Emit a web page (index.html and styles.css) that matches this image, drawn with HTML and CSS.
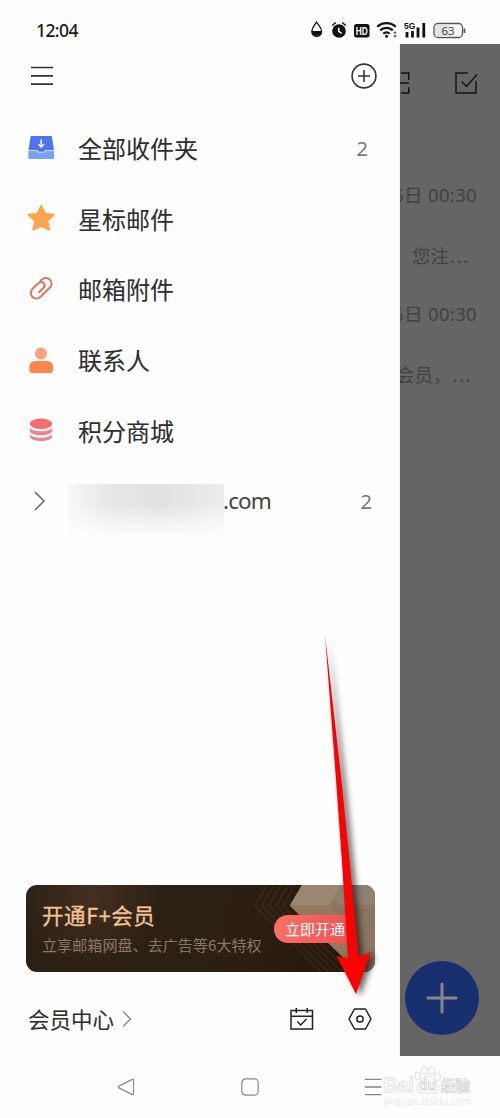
FILE: index.html
```html
<!DOCTYPE html>
<html lang="zh-CN">
<head>
<meta charset="utf-8">
<title>邮箱</title>
<link rel="stylesheet" href="styles.css">
</head>
<body>
<div class="phone">
  <header class="status">
    <span class="clock">12:04</span>
    <svg class="status-icons" width="160" height="24" viewBox="0 0 160 24">
      <path d="M6.500 4C4.500 7.500 1.800 9.600 1.800 13.500a4.900 4.900 0 0 0 9.800 0c0-3.900-3-6-5.100-9.500z" fill="none" stroke="#111" stroke-width="1.300"/>
      <path d="M1.800 13h9.800a4.900 5 0 0 1-9.800 0z" fill="#111"/>
      <circle cx="29" cy="13" r="6.800" fill="#111"/>
      <path d="M22.200 7.500l3.600-3M35.800 7.500l-3.600-3" stroke="#111" stroke-width="1.500"/>
      <path d="M28.800 9.800v3.600l2.800 2" stroke="#fff" stroke-width="1.500" fill="none"/>
      <rect x="44" y="6" width="15.500" height="13.500" rx="2.500" fill="#111"/>
      <text x="51.800" y="16.700" text-anchor="middle" class="hd" textLength="12" lengthAdjust="spacingAndGlyphs">HD</text>
      <path d="M67.200 8.800a13.500 13.500 0 0 1 18.600 0M70.200 12.400a9 9 0 0 1 12.600 0M73.300 15.800a4.500 4.500 0 0 1 6.400 0" fill="none" stroke="#111" stroke-width="2.200"/>
      <circle cx="76.500" cy="18.300" r="1.500" fill="#111"/>
      <path d="M83 15.500l2-2.500 2 2.500zM83 17.200l2 2.500 2-2.500z" fill="#555"/>
      <text x="94" y="11.300" class="fiveg">5G</text>
      <path d="M97 14v5.500M102.500 13v6.500M108 9.500v10M113.800 5v14.500" stroke="#111" stroke-width="2.800"/>
      <rect x="124" y="5.500" width="28.500" height="14" rx="4" fill="#fff" stroke="#555" stroke-width="1.300"/>
      <path d="M128 6.500h12v12.300h-12a3 3 0 0 1-3-3V9.500a3 3 0 0 1 3-3z" fill="#e3e3e3"/>
      <path d="M154.500 10.500v4.500" stroke="#555" stroke-width="1.800"/>
      <text x="138" y="16.700" text-anchor="middle" class="level">63</text>
    </svg>
  </header>

  <div class="main">
    <aside class="drawer">
      <div class="topbar">
        <svg width="26" height="26" viewBox="0 0 26 26"><path d="M2 4.500h22M2 12.800h22M2 21.200h22" stroke="#333" stroke-width="1.700"/></svg>
        <svg width="28" height="28" viewBox="0 0 28 28"><circle cx="14" cy="14" r="11.900" fill="none" stroke="#333" stroke-width="1.600"/><path d="M14 8v12M8 14h12" stroke="#333" stroke-width="1.600"/></svg>
      </div>

      <nav class="menu">
        <div class="item">
          <svg class="ico" width="28" height="28" viewBox="0 0 28 28"><path d="M4.500 2h19.300c.7 0 1 .4 1.200 1l2 13H18.500l-1.700 1.700h-5.300L9.800 16H1.500l2-13c.1-.6.4-1 1-1z" fill="#4f75ee"/><path d="M1.300 16.800h8l1.800 1.800h6.100l1.800-1.800h8V24q0 1-1 1H2.300q-1 0-1-1z" fill="#78a0f5"/><path d="M14.200 5.500v6.500M11.500 10.200l2.700 3 2.700-3" stroke="#fff" stroke-width="1.500" fill="none"/></svg>
          <span class="name">全部收件夹</span><span class="count">2</span>
        </div>
        <div class="item">
          <svg class="ico" width="28" height="28" viewBox="0 0 28 28"><path d="M14.200 1.500l4 8 8.700 1.100-6.300 6.300 1.800 9-8.200-3.700-8.200 3.700 1.700-9-6.400-6.300 8.800-1.100z" fill="#faa64c" stroke="#faa64c" stroke-width="1.500" stroke-linejoin="round"/></svg>
          <span class="name">星标邮件</span>
        </div>
        <div class="item">
          <svg class="ico" width="28" height="28" viewBox="0 0 28 28"><path d="M13.400 5.800l1.500-1.400c2-1.800 5.900-2 8.100.5 2.100 2.300 2.100 5.400.1 7.400l-9.200 9.200c-2.400 2.400-6 2.800-8.400.5-2.500-2.400-2.200-5.900.1-8.200l5.800-5.600c1.700-1.500 4-1.500 5.300-.1 1.400 1.500 1.100 3.500-.3 4.900l-4.300 4.200" fill="none" stroke="#da7563" stroke-width="2" stroke-linecap="round"/></svg>
          <span class="name">邮箱附件</span>
        </div>
        <div class="item">
          <svg class="ico" width="28" height="28" viewBox="0 0 28 28"><circle cx="14" cy="7.500" r="6" fill="#fca27c"/><path d="M2.300 24v-3.500a5.500 5.500 0 0 1 5.500-5.500H20.500a5.500 5.500 0 0 1 5.500 5.500V24q0 3-3 3H5.300q-3 0-3-3z" fill="#fd864d"/></svg>
          <span class="name">联系人</span>
        </div>
        <div class="item">
          <svg class="ico" width="28" height="28" viewBox="0 0 28 28"><ellipse cx="14" cy="7.800" rx="11.200" ry="5.300" fill="#f86c70"/><path d="M2.800 11.500c2 5 20.400 5 22.400 0v3.300c-1 6-21.400 6-22.400 0zM2.800 18c2 5 20.400 5 22.400 0v2.500c-1 6-21.400 6-22.400 0z" fill="#ed838b"/></svg>
          <span class="name">积分商城</span>
        </div>
        <div class="item account">
          <svg class="chev" width="14" height="22" viewBox="0 0 14 22"><path d="M1 2l9 9-9 9" fill="none" stroke="#666" stroke-width="1.500"/></svg>
          <span class="masked"></span><span class="domain">.com</span><span class="count">2</span>
        </div>
      </nav>

      <section class="vip">
        <svg class="vip-art" width="349" height="87" viewBox="0 0 349 87">
          <path d="M276 0h73v87h-17L264 21z" fill="#8d7660"/>
          <path d="M264 20h85v67h-17z" fill="#95795c"/>
          <path d="M276 0h38l-10 20h-40z" fill="#9b8670"/>
          <path d="M314 0h35v20h-35l-8-6z" fill="#8f8172"/>
          <path d="M304 20h45v67h-17l-6-30z" fill="#8b7660"/>
          <path d="M269 0l-12 21 66 66M262 0l-12 21 66 66M255 0l-12 21 66 66M248 0l-12 21 66 66M241 0l-12 21 66 66" fill="none" stroke="#4b3826" stroke-width="1.300" opacity=".55"/>
        </svg>
        <div class="vip-copy">
          <div class="vip-title">开通F+会员</div>
          <div class="vip-sub">立享邮箱网盘、去广告等6大特权</div>
        </div>
        <div class="vip-btn">立即开通</div>
      </section>

      <footer class="foot">
        <span class="center">会员中心</span>
        <svg class="more" width="12" height="18" viewBox="0 0 12 18"><path d="M2 1.500L9.500 9 2 16.500" fill="none" stroke="#888" stroke-width="1.400"/></svg>
        <svg class="cal" width="26" height="26" viewBox="0 0 26 26"><path d="M2 4.500h21.500V23H2zM2 10.300h21.500M7.300 2v5M18.200 2v5M8.300 15.500l3.400 3.500 5.800-6" fill="none" stroke="#222" stroke-width="1.500"/></svg>
        <svg width="26" height="26" viewBox="0 0 26 26"><path d="M7.500 3h11l5.500 10-5.500 10h-11L2 13z" fill="none" stroke="#222" stroke-width="1.500" stroke-linejoin="round"/><circle cx="13" cy="13" r="3.100" fill="none" stroke="#222" stroke-width="1.500"/></svg>
      </footer>
    </aside>

    <div class="inbox">
      <div class="tools">
        <svg width="11" height="24" viewBox="0 0 11 24"><path d="M1 2h7.800v7M0 12h9M1 22h7.800v-6" fill="none" stroke="#111" stroke-width="1.500"/></svg>
        <svg width="26" height="26" viewBox="0 0 26 26"><path d="M15 3H3v20h20V11M8.500 11.500l5 5L24 4.500" fill="none" stroke="#151515" stroke-width="1.500"/></svg>
      </div>
      <div class="mail">
        <div class="date">6日 00:30</div>
        <div class="excerpt first">您注<span class="dots">...</span></div>
      </div>
      <div class="mail">
        <div class="date">6日 00:30</div>
        <div class="excerpt">会员，<span class="dots">...</span></div>
      </div>
      <div class="compose"><svg width="34" height="34" viewBox="0 0 34 34"><path d="M17 3v28M3 17h28" stroke="#87868a" stroke-width="3" stroke-linecap="round"/></svg></div>
    </div>
  </div>

  <footer class="sysnav">
    <svg width="20" height="20" viewBox="0 0 20 20"><path d="M17.500 3.500v13q0 1.800-1.600.9L3 10.900q-1.500-.9 0-1.800l12.900-6.500q1.600-.9 1.600.9z" fill="none" stroke="#888" stroke-width="1.200"/></svg>
    <svg width="20" height="20" viewBox="0 0 20 20"><rect x="1.800" y="1.800" width="16.400" height="16.400" rx="4" fill="none" stroke="#888" stroke-width="1.200"/></svg>
    <svg width="20" height="20" viewBox="0 0 20 20"><path d="M2 2.300h16.500M2 10h16.500M2 17.700h16.500" stroke="#888" stroke-width="1.300"/></svg>
  </footer>

  <svg class="arrow" width="90" height="390" viewBox="0 0 90 390">
    <path class="arrow-body" d="M15 5L31.500 150 40.500 240 48.500 327 61 322 46 364 26.500 326 38 328.500 32.500 240 26 150z" fill="#fb0202"/>
  </svg>

  <svg class="watermark" width="96" height="46" viewBox="0 0 96 46">
    <g fill="#fff" stroke="#dedede" stroke-width="1">
      <ellipse cx="37" cy="12" rx="3" ry="4"/><ellipse cx="43.500" cy="6" rx="3" ry="4"/><ellipse cx="51" cy="6.500" rx="3" ry="4"/><ellipse cx="56.500" cy="13" rx="3" ry="4"/>
      <path d="M47 12c5 0 6 5 9 8s2 9-4 9H41c-6 0-7-6-3-9s4-8 9-8z"/>
    </g>
    <text x="2" y="28" class="wm-big" textLength="31">Bai</text>
    <text x="38" y="26" class="wm-du">du</text>
    <text x="60" y="27" class="wm-cn">经验</text>
    <text x="3" y="41" class="wm-url" textLength="87">jingyan.baidu.com</text>
  </svg>
</div>
</body>
</html>
```
FILE: styles.css
```css
* { box-sizing: border-box; }
body { margin: 0; background: #fefefe; font-family: "Noto Sans", "Noto Sans CJK SC", sans-serif; color: #2e2e2e; }
svg { display: block; flex: none; }
.phone { position: relative; width: 500px; height: 1118px; overflow: hidden; display: flex; flex-direction: column; }

.status { height: 44px; flex: none; display: flex; align-items: center; justify-content: space-between; padding: 16px 30px 0 36px; }
.clock { font: 500 17.500px/24px "Noto Sans", sans-serif; color: #1b1b1b; letter-spacing: -.6px; }
.hd { font: 700 10.500px "Liberation Sans", sans-serif; fill: #fff; }
.fiveg { font: 700 8.500px "Liberation Sans", sans-serif; fill: #111; }
.level { font: 11.500px "Noto Sans", sans-serif; fill: #444; }

.main { height: 1012px; flex: none; display: flex; }
.drawer { width: 400px; display: flex; flex-direction: column; border-right: 1px solid #f4f4f4; }
.topbar { height: 64px; display: flex; align-items: center; justify-content: space-between; padding: 0 21px 0 29px; }
.menu { padding-top: 5px; }
.item { height: 70.6px; display: flex; align-items: center; padding: 0 31px 0 27px; }
.ico { margin-bottom: 1px; }
.name { margin-left: 23px; font: 400 24px/36px "Noto Sans CJK SC", sans-serif; -webkit-text-stroke: .1px #2e2e2e; }
.count { margin-left: auto; padding-top: 2px; font: 20px/30px "Noto Sans", sans-serif; color: #777; }
.account { padding: 0 27px 0 34px; }
.chev { margin-bottom: 1px; }
.masked { width: 156px; height: 55px; margin: 21px 0 0 20px; background: linear-gradient(to bottom, #fefefe00 35%, #fefefe 98%), linear-gradient(to right, #f8f8f8, #e7e7e7 25%, #e1e1e1 60%, #ededed); }
.domain { margin-left: -1px; font: 22.500px/32px "Noto Sans", sans-serif; letter-spacing: -.9px; color: #444; }

.vip { position: relative; margin: auto 24px 0 26px; height: 87px; border-radius: 11px; overflow: hidden; flex: none; display: flex; justify-content: space-between; background: radial-gradient(circle at 65px 12px, #44301f, #2c2015 70px, #2b1d12 180px, #241508); }
.vip-art { position: absolute; left: 0; top: 0; }
.vip-copy { position: relative; padding: 14px 0 0 16px; }
.vip-title { font: 21.500px/31px "Noto Sans CJK SC", sans-serif; letter-spacing: .6px; color: #f5c394; -webkit-text-stroke: .3px #f5c394; }
.vip-sub { font: 15.100px/24px "Noto Sans CJK SC", sans-serif; color: #8b7668; margin-top: 2px; white-space: nowrap; }
.vip-btn { position: relative; width: 83px; height: 28px; margin: 30px 18px 0 0; border-radius: 14px; background: linear-gradient(90deg, #fa7066, #f34f51); color: #fff; font: 15px/28px "Noto Sans CJK SC", sans-serif; padding-left: 11px; white-space: nowrap; }
.foot { height: 40px; margin: 27px 26px 17px 28px; flex: none; display: flex; align-items: center; }
.center { font: 21.500px/34px "Noto Sans CJK SC", sans-serif; -webkit-text-stroke: .1px #2e2e2e; }
.more { margin-left: 7px; }
.cal { margin: 0 32px 0 auto; }

.inbox { width: 100px; background: #656565; display: flex; flex-direction: column; overflow: hidden; color: #414141; }
.tools { height: 77px; display: flex; align-items: center; justify-content: space-between; padding-right: 21px; flex: none; }
.mail { height: 119px; margin-top: 46px; flex: none; border-bottom: 1px solid #5f5f5f; }
.mail + .mail { margin-top: 0; border-bottom: 0; }
.date { width: 88px; margin-left: -11px; padding-top: 12px; display: flex; justify-content: flex-end; white-space: nowrap; font: 18.500px/32px "Noto Sans", "Noto Sans CJK SC", sans-serif; letter-spacing: .35px; }
.excerpt { margin: 28px 0 0 -4px; font: 18.500px/32px "Noto Sans CJK SC", sans-serif; white-space: nowrap; }
.excerpt.first { margin-left: 12px; }
.dots { letter-spacing: 1.300px; margin-left: 1px; }
.compose { width: 74px; height: 74px; border-radius: 50%; background: #18306f; margin: auto 0 21px 5px; display: grid; place-items: center; flex: none; }

.sysnav { height: 62px; flex: none; display: flex; justify-content: space-between; align-items: center; padding: 0 117px 0 116px; }
.arrow { position: absolute; left: 310px; top: 630px; overflow: visible; }
.arrow-body { filter: drop-shadow(4px 2px 3px #0009); }
.watermark { position: absolute; left: 381px; top: 1064px; }
.wm-big { font: 700 20px "Liberation Sans", sans-serif; fill: #fff; stroke: #dedede; stroke-width: .8px; }
.wm-du { font: 700 14px "Liberation Sans", sans-serif; fill: #fff; stroke: #d0d0d0; stroke-width: .8px; }
.wm-cn { font: 700 14.500px/1 "Noto Sans CJK SC", sans-serif; fill: #fff; stroke: #d4d4d4; stroke-width: .8px; }
.wm-url { font: 10.500px "Liberation Sans", sans-serif; fill: #e9e9e9; }
```
